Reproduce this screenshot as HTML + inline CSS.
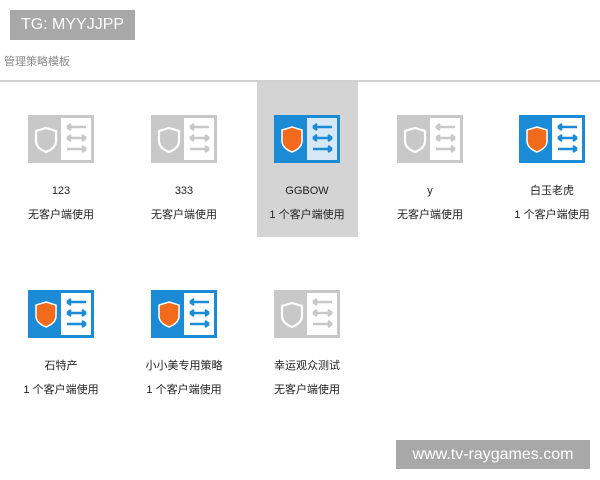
<!DOCTYPE html>
<html><head><meta charset="utf-8"><style>
body{margin:0;width:600px;height:480px;background:#fff;position:relative;overflow:hidden;font-family:"Liberation Sans","Noto Sans CJK SC",sans-serif}
.tg{position:absolute;left:10px;top:10px;width:125px;height:30px;background:#a8a8a8;color:#fff;font-size:16px;line-height:30px;text-align:center}
.title{position:absolute;left:4px;top:55px;font-size:11px;line-height:15px;color:#888}
.line{position:absolute;left:0;top:80px;width:600px;height:2px;background:#d0d0d0}
.hl{position:absolute;left:257px;top:82px;width:101px;height:155px;background:#d4d4d4}
.it{position:absolute;width:120px;text-align:center;font-size:11px;color:#222}
.it svg{position:absolute;left:27px;top:0}
.n{position:absolute;top:69px;width:120px;left:0;height:14px;line-height:14px}
.u{position:absolute;top:93px;width:120px;left:0;height:14px;line-height:14px}
.wm{position:absolute;left:396px;top:440px;width:194px;height:29px;background:#a8a8a8;color:#fff;font-size:16px;line-height:29px;text-align:center}
</style></head><body>
<div class="tg">TG: MYYJJPP</div>
<div class="title">管理策略模板</div>
<div class="line"></div>
<div class="hl"></div>
<svg width="0" height="0" style="position:absolute">
<defs>
<g id="arr" fill="none" stroke-width="2.4">
<path d="M39 12H58M39 12L43 9M39 12L43 15"/>
<path d="M39 23H58M39 23L43 20M39 23L43 26M58 23L54 20M58 23L54 26"/>
<path d="M39 34H58M58 34L54 31M58 34L54 37"/>
</g>
</defs></svg>
<div class="it" style="left:1px;top:115px"><svg width="66" height="48"><rect width="66" height="48" fill="#c8c8c8"/><rect x="33" y="3" width="30" height="42" fill="#fff"/><path d="M18 13 L28 16 V26 Q28 33 18 37 Q8 33 8 26 V16 Z" fill="none" stroke="#fff" stroke-width="2.2"/><use href="#arr" stroke="#c8c8c8"/></svg><div class="n">123</div><div class="u">无客户端使用</div></div>
<div class="it" style="left:124px;top:115px"><svg width="66" height="48"><rect width="66" height="48" fill="#c8c8c8"/><rect x="33" y="3" width="30" height="42" fill="#fff"/><path d="M18 13 L28 16 V26 Q28 33 18 37 Q8 33 8 26 V16 Z" fill="none" stroke="#fff" stroke-width="2.2"/><use href="#arr" stroke="#c8c8c8"/></svg><div class="n">333</div><div class="u">无客户端使用</div></div>
<div class="it" style="left:247px;top:115px"><svg width="66" height="48"><rect width="66" height="48" fill="#1b8bd6"/><rect x="33" y="3" width="30" height="42" fill="#d6e8f6"/><path d="M18 12 L28 15 V26 Q28 33 18 37 Q8 33 8 26 V15 Z" fill="#f26a1b" stroke="#fff" stroke-width="1.5"/><use href="#arr" stroke="#1b8bd6"/></svg><div class="n">GGBOW</div><div class="u">1 个客户端使用</div></div>
<div class="it" style="left:370px;top:115px"><svg width="66" height="48"><rect width="66" height="48" fill="#c8c8c8"/><rect x="33" y="3" width="30" height="42" fill="#fff"/><path d="M18 13 L28 16 V26 Q28 33 18 37 Q8 33 8 26 V16 Z" fill="none" stroke="#fff" stroke-width="2.2"/><use href="#arr" stroke="#c8c8c8"/></svg><div class="n">y</div><div class="u">无客户端使用</div></div>
<div class="it" style="left:492px;top:115px"><svg width="66" height="48"><rect width="66" height="48" fill="#1b8bd6"/><rect x="33" y="3" width="30" height="42" fill="#fff"/><path d="M18 12 L28 15 V26 Q28 33 18 37 Q8 33 8 26 V15 Z" fill="#f26a1b" stroke="#fff" stroke-width="1.5"/><use href="#arr" stroke="#1b8bd6"/></svg><div class="n">白玉老虎</div><div class="u">1 个客户端使用</div></div>
<div class="it" style="left:1px;top:290px"><svg width="66" height="48"><rect width="66" height="48" fill="#1b8bd6"/><rect x="33" y="3" width="30" height="42" fill="#fff"/><path d="M18 12 L28 15 V26 Q28 33 18 37 Q8 33 8 26 V15 Z" fill="#f26a1b" stroke="#fff" stroke-width="1.5"/><use href="#arr" stroke="#1b8bd6"/></svg><div class="n">石特产</div><div class="u">1 个客户端使用</div></div>
<div class="it" style="left:124px;top:290px"><svg width="66" height="48"><rect width="66" height="48" fill="#1b8bd6"/><rect x="33" y="3" width="30" height="42" fill="#fff"/><path d="M18 12 L28 15 V26 Q28 33 18 37 Q8 33 8 26 V15 Z" fill="#f26a1b" stroke="#fff" stroke-width="1.5"/><use href="#arr" stroke="#1b8bd6"/></svg><div class="n">小小美专用策略</div><div class="u">1 个客户端使用</div></div>
<div class="it" style="left:247px;top:290px"><svg width="66" height="48"><rect width="66" height="48" fill="#c8c8c8"/><rect x="33" y="3" width="30" height="42" fill="#fff"/><path d="M18 13 L28 16 V26 Q28 33 18 37 Q8 33 8 26 V16 Z" fill="none" stroke="#fff" stroke-width="2.2"/><use href="#arr" stroke="#c8c8c8"/></svg><div class="n">幸运观众测试</div><div class="u">无客户端使用</div></div>
<div class="wm">www.tv-raygames.com</div>
</body></html>
